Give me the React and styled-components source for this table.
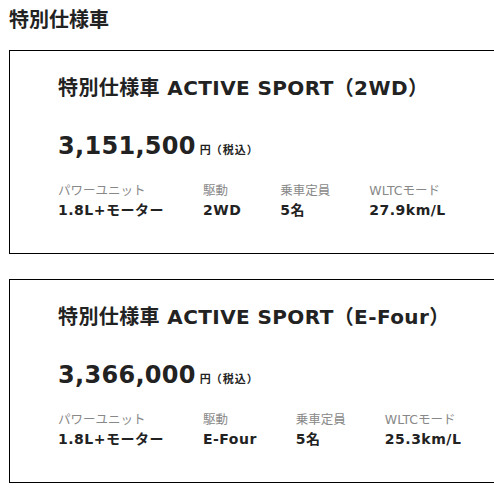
import React from "react";
import styled, { createGlobalStyle } from "styled-components";

const Global = createGlobalStyle`
  html, body { margin: 0; padding: 0; background: #fff; overflow: hidden; }
  body { font-family: "DejaVu Sans", "Noto Sans CJK JP", sans-serif; color: #222; }
`;

const Page = styled.div`
  padding: 8px 0 0 9px;
  width: 560px;
`;

const Heading = styled.h2`
  margin: 0 0 18px 0;
  font-size: 20px;
  line-height: 24px;
  font-weight: bold;
  color: #222;
`;

const CardList = styled.div`
  display: flex;
  flex-direction: column;
  gap: 25px;
`;

const Card = styled.section`
  border: 1px solid #000;
  padding: 25px 0 33px 48px;
  width: 520px;
`;

const Title = styled.h3`
  margin: 0;
  font-size: 20px;
  line-height: 24px;
  font-weight: bold;
  letter-spacing: 0.4px;
  color: #222;
  white-space: nowrap;
`;

const PriceRow = styled.div`
  margin-top: 32px;
  display: flex;
  align-items: baseline;
`;

const Price = styled.span`
  font-size: 24px;
  line-height: 28.8px;
  font-weight: bold;
  letter-spacing: 0.3px;
  color: #222;
`;

const Yen = styled.span`
  margin-left: 4px;
  font-size: 11px;
  font-weight: bold;
`;

const Tax = styled.span`
  font-size: 11px;
  letter-spacing: 1px;
  font-weight: bold;
`;

const Specs = styled.dl`
  margin: 22px 0 0 0;
  display: flex;
  gap: 39px;
`;

const Spec = styled.div`
  display: flex;
  flex-direction: column;
  gap: 1px;
`;

const Label = styled.dt`
  font-size: 12.5px;
  line-height: 16.8px;
  color: #888;
`;

const Value = styled.dd`
  margin: 0;
  font-size: 14px;
  line-height: 19.6px;
  font-weight: bold;
  letter-spacing: 0.5px;
  color: #222;
  white-space: nowrap;
`;

const cars = [
  {
    title: "特別仕様車 ACTIVE SPORT（2WD）",
    price: "3,151,500",
    specs: [
      ["パワーユニット", "1.8L+モーター"],
      ["駆動", "2WD"],
      ["乗車定員", "5名"],
      ["WLTCモード", "27.9km/L"],
    ],
  },
  {
    title: "特別仕様車 ACTIVE SPORT（E-Four）",
    price: "3,366,000",
    specs: [
      ["パワーユニット", "1.8L+モーター"],
      ["駆動", "E-Four"],
      ["乗車定員", "5名"],
      ["WLTCモード", "25.3km/L"],
    ],
  },
];

export default function App() {
  return (
    <>
      <Global />
      <Page>
        <Heading>特別仕様車</Heading>
        <CardList>
          {cars.map((c) => (
            <Card key={c.title}>
              <Title>{c.title}</Title>
              <PriceRow>
                <Price>{c.price}</Price>
                <Yen>円</Yen>
                <Tax>（税込）</Tax>
              </PriceRow>
              <Specs>
                {c.specs.map(([l, v]) => (
                  <Spec key={l}>
                    <Label>{l}</Label>
                    <Value>{v}</Value>
                  </Spec>
                ))}
              </Specs>
            </Card>
          ))}
        </CardList>
      </Page>
    </>
  );
}
